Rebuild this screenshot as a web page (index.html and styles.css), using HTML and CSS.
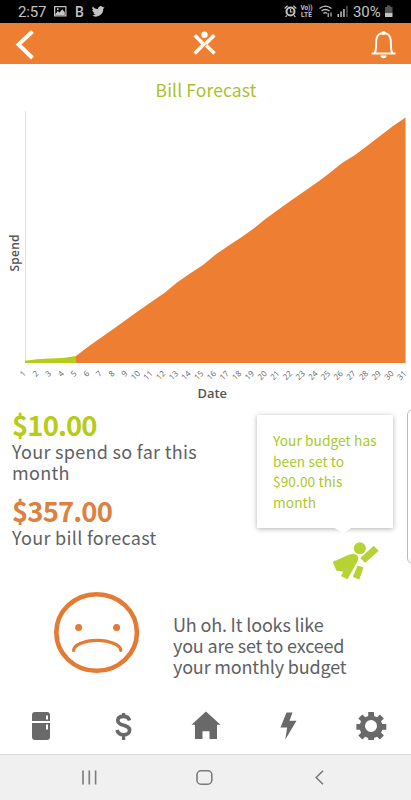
FILE: index.html
```html
<!DOCTYPE html>
<html lang="en">
<head>
<meta charset="utf-8">
<title>Bill Forecast</title>
<link rel="stylesheet" href="styles.css">
</head>
<body>
<div class="statusbar">
  <span class="clock">2:57</span>
  <svg class="status-left" width="56" height="23" viewBox="0 0 56 23">
    <path fill="#c4c4c4" fill-rule="evenodd" d="M1 6h12.500v10.500H1zM2.300 7.300v7.900h10V7.300zM2.500 14l2.300-3 1.700 1.600 2.800-3.300 2.500 3V15H2.500zM4 8.300h1.600v1.600H4z"/>
    <text x="22" y="16.800" class="status-b">B</text>
    <path fill="#c4c4c4" transform="translate(38.500 4.800) scale(.57)" d="M23 4.600c-.8.400-1.700.6-2.600.7 1-.5 1.600-1.400 2-2.500-.9.500-1.900.9-3 1.100A4.600 4.600 0 0 0 11.500 8 13 13 0 0 1 2 3.200a4.600 4.600 0 0 0 1.400 6.100c-.7 0-1.400-.2-2-.6 0 2.200 1.500 4.100 3.700 4.600-.7.200-1.400.2-2.100.1.600 1.800 2.300 3.100 4.300 3.200A9.200 9.200 0 0 1 .5 18.500 13 13 0 0 0 20.600 7c.9-.7 1.700-1.500 2.400-2.400z"/>
  </svg>
  <svg class="status-right" width="67" height="23" viewBox="0 0 67 23">
    <g fill="none" stroke="#c4c4c4">
      <circle cx="6.500" cy="11.500" r="4" stroke-width="2"/>
      <path d="M6.500 9v3h2.200M.6 8.500l3-2.800M12.400 8.500l-3-2.800M3 15.500l-1.500 1.400M10 15.500l1.500 1.400" stroke-width="1.200"/>
    </g>
    <text x="16.500" y="10.300" class="lte" textLength="12">Vo))</text>
    <text x="17" y="17" class="lte" textLength="11">LTE</text>
    <g fill="none" stroke="#c4c4c4" stroke-width="1.400">
      <path d="M35.500 8.500Q41.500 3.800 47.500 8.500M37.500 11Q41.500 8 45.500 11M39.500 13.400Q41.300 12 43 13.200"/>
      <path d="M44.200 17v-4M47 12.500v4" stroke-width="1.200"/>
    </g>
    <path fill="#c4c4c4" d="M53.500 14h1.500v3h-1.500zM56.300 11.500h1.500V17h-1.500zM59.200 9h1.500v8h-1.500z"/>
    <path fill="#555" d="M62.200 6h1.500v11h-1.500z"/>
  </svg>
  <span class="percent">30%</span>
  <svg width="10" height="23" viewBox="0 0 10 23">
    <path fill="#555" d="M3 5.500h3.500V7h2v6H1V7h2z"/>
    <path fill="#c4c4c4" d="M1 13h7.500v4H1z"/>
  </svg>
</div>
<header class="appbar">
  <svg width="411" height="41" viewBox="0 0 411 41">
    <path d="M32.500 8.500L18.500 21.500l14 13.500" fill="none" stroke="#fffdf5" stroke-width="4"/>
    <g stroke="#fffdf5" stroke-width="3.600" fill="none">
      <path d="M194.700 12.300l9 9-9 9.200M214.300 12.300l-8.600 8.300M214.500 30.500l-8.200-8"/>
    </g>
    <circle cx="204.500" cy="11.800" r="3.200" fill="#fffdf5"/>
    <g fill="none" stroke="#fffdf5" stroke-width="2">
      <path d="M371.500 30.500h24M374.500 30c2.500-2.500 1-11 2-14.500 1-4 4-5.200 7-5.200s6 1.200 7 5.200c1 3.500-.5 12 2 14.500"/>
    </g>
    <path fill="#fffdf5" d="M380.500 32.500h6a3 2.800 0 0 1-6 0z"/>
    <circle cx="383.500" cy="10" r="2" fill="#fffdf5"/>
  </svg>
</header>
<main>
  <h1>Bill Forecast</h1>
  <svg class="chart" width="411" height="300" viewBox="0 104 411 300">
    <path d="M25.500 111v252" stroke="#ddd" stroke-width="1"/>
    <path fill="#b5cc18" d="M25 363v-2.200l12-1.600 13-.8 13-.5 13-2v7.100z"/>
    <path fill="#ee7e31" d="M76 363v-7.100L88.400 346.500 114 328.500 139 310.500 165 292.500 177 282.500 190 273.500 203 265 215 255 228 246 241 237.500 253 229 266 218.500 291 200.500 317 182.500 329 173.500 342 163 355 155 367 146 380 136 393 126 405.500 117.500V363z"/>
    <text class="axis" transform="translate(19 271.500) rotate(-90)" textLength="37">Spend</text>
    <text class="axis" x="197.500" y="397.500" textLength="29.500" lengthAdjust="spacingAndGlyphs">Date</text>
    <g id="ticks"></g>
  </svg>
  <section class="summary">
    <div class="totals">
      <div class="amount spent">$10.00</div>
      <p class="label">Your spend so far this month</p>
      <div class="amount forecast">$357.00</div>
      <p class="label">Your bill forecast</p>
    </div>
    <div class="advice">
      <div class="bubble">Your budget has been set to $90.00 this month</div>
      <svg class="hero" width="48" height="40" viewBox="330 540 48 40" fill="#b5d333">
        <circle cx="358.800" cy="548.200" r="6"/>
        <path d="M359.500 558l13.200-12.300 5 5L364 563z"/>
        <path d="M332 562.500c0-1.500 1-1.500 3-2l12-5.500c5-2 10-1.500 10.300 3 0 2-.8 3.500-1.800 5l-9 16.300-6.500-3.300 2.300-4.300-7-1.200z"/>
        <path d="M356.500 565.500l6 2-4.200 12-6.500-2.500z"/>
      </svg>
    </div>
    <div class="next-card"></div>
  </section>
  <section class="alert">
    <svg width="90" height="86" viewBox="0 0 90 86" fill="none" stroke="#e47b35">
      <ellipse cx="44.600" cy="42.500" rx="40.300" ry="38.300" stroke-width="4.600"/>
      <path d="M21.600 60.500c0-5 10-10.200 23.400-10.200S68.800 55.500 68.800 60.500" stroke-width="3.200" stroke-linecap="round"/>
      <circle cx="26.600" cy="37.400" r="3.500" fill="#e47b35" stroke="none"/>
      <circle cx="64.600" cy="37.400" r="3.500" fill="#e47b35" stroke="none"/>
    </svg>
    <p>Uh oh. It looks like<br>you are set to exceed<br>your monthly budget</p>
  </section>
</main>
<nav class="tabs">
  <svg width="411" height="64" viewBox="0 690 411 64" fill="#696969">
    <path fill-rule="evenodd" d="M32 721v-6q0-3 3-3h12q3 0 3 3v6zM46 715.500v4h2v-4zM32 723h18v14q0 3-3 3H35q-3 0-3-3zM46 724.500v5h2v-5z"/>
    <path d="M129.500 720.500c-.8-2.800-2.800-4.100-5.900-4.100-3.500 0-5.800 1.400-5.800 4 0 2.900 2.600 3.900 5.800 4.900 3.500 1.100 6 2 6 5 0 2.800-2.500 4.500-6 4.500-3.600 0-5.800-1.600-6.600-4.800" fill="none" stroke="#696969" stroke-width="3.600"/>
    <path d="M122 713h3.200v4H122zM122 735h3.200v5H122z"/>
    <path d="M206 711.500l14.500 13.200H217V739h-7.500v-7.700h-7V739H195v-14.300h-3.500z"/>
    <path d="M286.500 712.500h6l-3 8.200h7l-11.300 19 2-12.200h-6.700z"/>
    <path fill-rule="evenodd" d="M368.200 712h5.800v4l3 1.200 2.900-2.800 4 4-2.800 2.900 1.200 2.700h4v5.800h-4l-1.200 2.900 2.800 2.900-4 3.900-2.900-2.700-3 1.200v2h-5.800v-2l-3-1.200-2.900 2.700-4-3.900 2.800-2.900-1.200-2.900h-3.500V724h3.500l1.200-2.700-2.800-2.900 4-4 2.900 2.800 3-1.200zM371 720a6 6 0 1 0 0 12 6 6 0 0 0 0-12z"/>
  </svg>
</nav>
<footer class="sysnav">
  <svg width="411" height="45" viewBox="0 755 411 45" fill="none" stroke="#7b7b7b" stroke-width="1.600">
    <path d="M83 770.500v14M89.300 770.500v14M95.600 770.500v14"/>
    <rect x="197" y="770.800" width="14.800" height="13.400" rx="4"/>
    <path d="M323 770.800l-6.800 6.700 6.800 6.700"/>
  </svg>
</footer>
<script src="chart.js"></script>
</body>
</html>
```
FILE: chart.js
```js
const ticks = document.getElementById('ticks');
for (let day = 1; day <= 31; day++) {
  const label = document.createElementNS('http://www.w3.org/2000/svg', 'text');
  const x = 26.5 + (day - 1) * 12.68;
  label.setAttribute('transform', `translate(${x} 374) rotate(-45)`);
  label.setAttribute('class', 'tick');
  label.textContent = day;
  ticks.appendChild(label);
}
```
FILE: styles.css
```css
* { box-sizing: border-box; }
body {
  margin: 0;
  width: 411px;
  height: 800px;
  display: flex;
  flex-direction: column;
  overflow: hidden;
  background: #fff;
  color: #606163;
  font-family: "Noto Sans CJK SC", "Noto Sans", sans-serif;
}
svg { display: block; flex: none; }
p, h1 { margin: 0; }
.statusbar {
  height: 23px;
  display: flex;
  align-items: center;
  background: #000;
  color: #c4c4c4;
  font: 15px/23px Roboto, sans-serif;
  padding: 0 17px 0 18px;
}
.clock { width: 35px; letter-spacing: -.2px; padding-top: 1px; }
.status-right { margin-left: auto; }
.percent { width: 33px; padding: 1px 0 0 2px; letter-spacing: -.1px; }
.status-b { font: 500 14px Roboto, sans-serif; fill: #c4c4c4; }
.lte { font: 700 6.500px Roboto, sans-serif; fill: #c4c4c4; }
.appbar { height: 41px; background: #ee7e31; }
main { height: 626px; }
h1 {
  height: 40px;
  padding: 12px 0 0 1px;
  text-align: center;
  font-size: 17.500px;
  line-height: 28px;
  font-weight: 400;
  letter-spacing: .1px;
  color: #a9c22b;
}
.axis { font: 600 12px "Open Sans", sans-serif; fill: #555; }
.tick { font: 8px "Open Sans", sans-serif; fill: #666; text-anchor: end; }
.summary { height: 186px; display: flex; }
.totals { width: 257px; flex: none; padding: 4px 52px 0 12px; }
.amount {
  font-size: 27.500px;
  line-height: 33px;
  height: 33px;
  font-weight: 700;
  letter-spacing: -.9px;
}
.spent { color: #b5cc18; }
.forecast { color: #dd8040; margin-top: 11px; }
.label { font-size: 18px; line-height: 21px; letter-spacing: .3px; }
.advice { width: 150px; flex: none; padding-top: 11px; }
.bubble {
  position: relative;
  width: 136px;
  height: 113px;
  padding: 15px 8px 0 16px;
  font-size: 13.700px;
  line-height: 20.500px;
  letter-spacing: .08px;
  color: #a9c92a;
  background: #fff;
  box-shadow: 0 1px 5px rgba(0, 0, 0, .3);
}
.bubble::after {
  content: "";
  position: absolute;
  left: 76px;
  top: 112px;
  border: 10px solid transparent;
  border-top: 6px solid #fff;
  border-bottom: 0;
}
.hero { margin: 12px 0 0 74px; }
.next-card {
  width: 20px;
  flex: none;
  height: 155px;
  margin-top: 5px;
  border: 1px solid #bbb;
  border-radius: 6px;
}
.alert { display: flex; align-items: flex-start; padding-left: 52px; }
.alert p {
  padding: 24px 0 0 31px;
  font-size: 18px;
  line-height: 21px;
  letter-spacing: -.17px;
  white-space: nowrap;
}
.tabs { height: 64px; }
.sysnav { height: 46px; background: #f0f0f0; border-top: 1px solid #ddd; }
```
